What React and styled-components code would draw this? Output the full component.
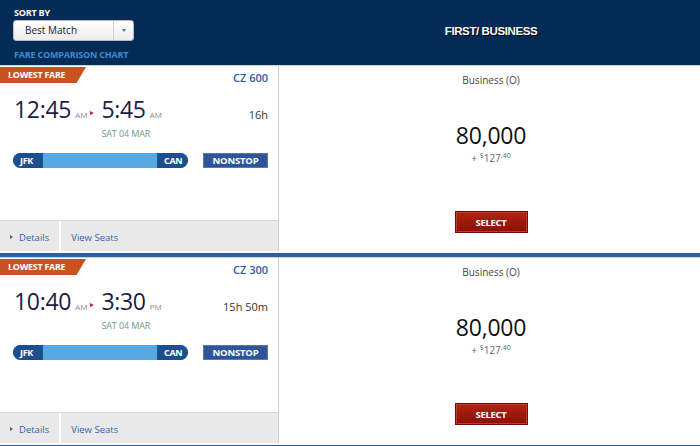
import React from 'react';
import styled, { createGlobalStyle } from 'styled-components';

const GlobalStyle = createGlobalStyle`
  html, body {
    margin: 0;
    padding: 0;
    background: #ffffff;
    font-family: "Open Sans", "Liberation Sans", sans-serif;
  }
`;

const Page = styled.div`
  width: 700px;
  height: 446px;
  overflow: hidden;
  background: #fff;
`;

// header
const Header = styled.div`
  display: flex;
  height: 65px;
  background: #032b56;
  border-bottom: 1px solid #8a93a3;
`;

const SortPanel = styled.div`
  width: 265px;
  padding: 7px 0 0 13px;
  display: flex;
  flex-direction: column;
`;

const SortLabel = styled.div`
  color: #fff;
  font-size: 9px;
  font-weight: 700;
  letter-spacing: -0.2px;
  line-height: 11px;
  margin-left: 1px;
`;

const SortSelect = styled.div`
  margin-top: 2px;
  width: 121px;
  height: 21px;
  box-sizing: border-box;
  display: flex;
  background: linear-gradient(#ffffff, #ececec);
  border: 1px solid #b7bcc4;
  border-radius: 3px;
`;

const SelectText = styled.div`
  flex: 1;
  font-size: 10px;
  color: #222;
  line-height: 19px;
  padding-left: 11px;
`;

const SelectArrow = styled.div`
  width: 19px;
  border-left: 1px solid #cfd3d8;
  display: flex;
  align-items: center;
  justify-content: center;
  &::after {
    content: '';
    border-left: 2.5px solid transparent;
    border-right: 2.5px solid transparent;
    border-top: 3px solid #3d74b8;
  }
`;

const ChartLink = styled.div`
  margin-top: 7px;
  color: #3d8bd3;
  font-size: 9px;
  font-weight: 700;
  letter-spacing: -0.2px;
  margin-left: 1px;
`;

const CabinTitle = styled.div`
  flex: 1;
  display: flex;
  align-items: center;
  justify-content: center;
  padding: 0 0 3px 4px;
  color: #fff;
  font-family: "Liberation Sans", Arial, sans-serif;
  font-weight: 700;
  font-size: 11.5px;
  letter-spacing: -0.4px;
  text-shadow: 1px 1px 0 #000;
`;

// rows
const Row = styled.div`
  display: flex;
  border-bottom: 4px solid #2a62a0;
  box-shadow: 0 -1px 0 #cfd4da;
  margin-bottom: 1px;
`;

const FlightCard = styled.div`
  width: 278px;
  height: 185px;
  border-right: 1px solid #cfcfcf;
  display: flex;
  flex-direction: column;
  margin-bottom: 2px;
`;

const CardBody = styled.div`
  flex: 1;
  padding-top: 1px;
`;

const TopLine = styled.div`
  display: flex;
  justify-content: space-between;
  align-items: flex-start;
`;

const FareTag = styled.div`
  height: 16px;
  width: 86px;
  box-sizing: border-box;
  padding-left: 8px;
  background: #c9521e;
  clip-path: polygon(0 0, 100% 0, 89% 100%, 0 100%);
  color: #fff;
  font-size: 9px;
  font-weight: 700;
  letter-spacing: -0.3px;
  line-height: 16px;
`;

const FlightNo = styled.div`
  color: #2d5ba8;
  font-size: 11px;
  font-weight: 600;
  margin: 3px 10px 0 0;
`;

const TimesLine = styled.div`
  display: flex;
  align-items: flex-start;
  padding: 12px 10px 0 14px;
`;

const TimeBlock = styled.div`
  display: flex;
  flex-direction: column;
`;

const Time = styled.div`
  display: flex;
  align-items: baseline;
  color: #1b1d45;
  font-size: 23px;
  line-height: 24px;
  letter-spacing: -0.3px;
`;

const Meridiem = styled.span`
  font-size: 8px;
  color: #8a8a8a;
  margin-left: 4px;
  letter-spacing: 0;
`;

const Arrow = styled.span`
  margin: 14px 7px 0 3px;
  border-top: 2.5px solid transparent;
  border-bottom: 2.5px solid transparent;
  border-left: 4px solid #d0203c;
`;

const DateText = styled.div`
  color: #6d9c7e;
  font-size: 9px;
  line-height: 12px;
  margin-top: 1px;
  letter-spacing: -0.1px;
`;

const Duration = styled.div`
  margin-left: auto;
  color: #333;
  font-size: 11px;
  line-height: 15px;
  margin-top: 10px;
`;

const RouteLine = styled.div`
  display: flex;
  align-items: center;
  padding: 13px 10px 0 13px;
`;

const RouteBar = styled.div`
  width: 175px;
  height: 15px;
  display: flex;
  background: #57a9e1;
  border-radius: 8px;
  overflow: hidden;
`;

const Airport = styled.div`
  background: #1b4f8e;
  color: #fff;
  font-size: 9px;
  font-weight: 700;
  line-height: 15px;
  letter-spacing: -0.3px;
  text-align: ${(p) => (p.end ? 'right' : 'left')};
  padding: 0 6px 0 7px;
  box-sizing: border-box;
  margin-left: ${(p) => (p.end ? 'auto' : '0')};
  width: ${(p) => (p.end ? '31px' : '30px')};
`;

const Nonstop = styled.div`
  margin-left: auto;
  width: 65px;
  height: 15px;
  box-sizing: border-box;
  background: #2e5597;
  border: 1px solid #5878ad;
  color: #fff;
  font-size: 9.5px;
  font-weight: 700;
  line-height: 13px;
  text-align: center;
  letter-spacing: -0.2px;
`;

const CardFooter = styled.div`
  height: 30px;
  display: flex;
  background: #e9e9e9;
  border-top: 1px solid #d6d6d6;
`;

const FooterLink = styled.div`
  display: flex;
  align-items: center;
  color: #3e5da3;
  font-size: 9.5px;
  padding: 2px 10px 0 10px;
  border-right: ${(p) => (p.divided ? '2px solid #fff' : 'none')};
`;

const SmallCaret = styled.span`
  margin-right: 6px;
  border-top: 2.5px solid transparent;
  border-bottom: 2.5px solid transparent;
  border-left: 3.5px solid #3e5da3;
`;

const FareCell = styled.div`
  flex: 1;
  display: flex;
  flex-direction: column;
  align-items: center;
  padding-left: 3px;
`;

const FareClass = styled.div`
  margin-top: 7px;
  color: #444;
  font-size: 10px;
`;

const Miles = styled.div`
  margin-top: 34px;
  color: #111;
  font-size: 23px;
  line-height: 28px;
  letter-spacing: -0.2px;
`;

const Taxes = styled.div`
  margin-top: 3px;
  color: #666;
  font-size: 10px;
  line-height: 12px;
  sup {
    font-size: 7px;
    vertical-align: 4px;
    line-height: 0;
  }
`;

const SelectButton = styled.button`
  margin-top: 47px;
  width: 73px;
  height: 22px;
  background: linear-gradient(#b22211, #8a0f07);
  border: 1px solid #6d0c05;
  box-shadow: inset 0 0 0 1px #c23a28;
  color: #fff;
  font-family: "Open Sans", "Liberation Sans", sans-serif;
  font-size: 9.5px;
  font-weight: 700;
  letter-spacing: -0.3px;
  padding: 0;
`;

const flights = [
  { no: 'CZ 600', dep: '12:45', depM: 'AM', arr: '5:45', arrM: 'AM', date: 'SAT 04 MAR', dur: '16h' },
  { no: 'CZ 300', dep: '10:40', depM: 'AM', arr: '3:30', arrM: 'PM', date: 'SAT 04 MAR', dur: '15h 50m' },
];

const FlightRow = ({ flight }) => (
  <Row>
    <FlightCard>
      <CardBody>
        <TopLine>
          <FareTag>LOWEST FARE</FareTag>
          <FlightNo>{flight.no}</FlightNo>
        </TopLine>
        <TimesLine>
          <Time>
            {flight.dep}
            <Meridiem>{flight.depM}</Meridiem>
          </Time>
          <Arrow />
          <TimeBlock>
            <Time>
              {flight.arr}
              <Meridiem>{flight.arrM}</Meridiem>
            </Time>
            <DateText>{flight.date}</DateText>
          </TimeBlock>
          <Duration>{flight.dur}</Duration>
        </TimesLine>
        <RouteLine>
          <RouteBar>
            <Airport>JFK</Airport>
            <Airport end>CAN</Airport>
          </RouteBar>
          <Nonstop>NONSTOP</Nonstop>
        </RouteLine>
      </CardBody>
      <CardFooter>
        <FooterLink divided>
          <SmallCaret />
          Details
        </FooterLink>
        <FooterLink>View Seats</FooterLink>
      </CardFooter>
    </FlightCard>
    <FareCell>
      <FareClass>Business (O)</FareClass>
      <Miles>80,000</Miles>
      <Taxes>
        + <sup>$</sup>127<sup>.40</sup>
      </Taxes>
      <SelectButton>SELECT</SelectButton>
    </FareCell>
  </Row>
);

export default function App() {
  return (
    <Page>
      <GlobalStyle />
      <Header>
        <SortPanel>
          <SortLabel>SORT BY</SortLabel>
          <SortSelect>
            <SelectText>Best Match</SelectText>
            <SelectArrow />
          </SortSelect>
          <ChartLink>FARE COMPARISON CHART</ChartLink>
        </SortPanel>
        <CabinTitle>FIRST/ BUSINESS</CabinTitle>
      </Header>
      {flights.map((f) => (
        <FlightRow key={f.no} flight={f} />
      ))}
    </Page>
  );
}
